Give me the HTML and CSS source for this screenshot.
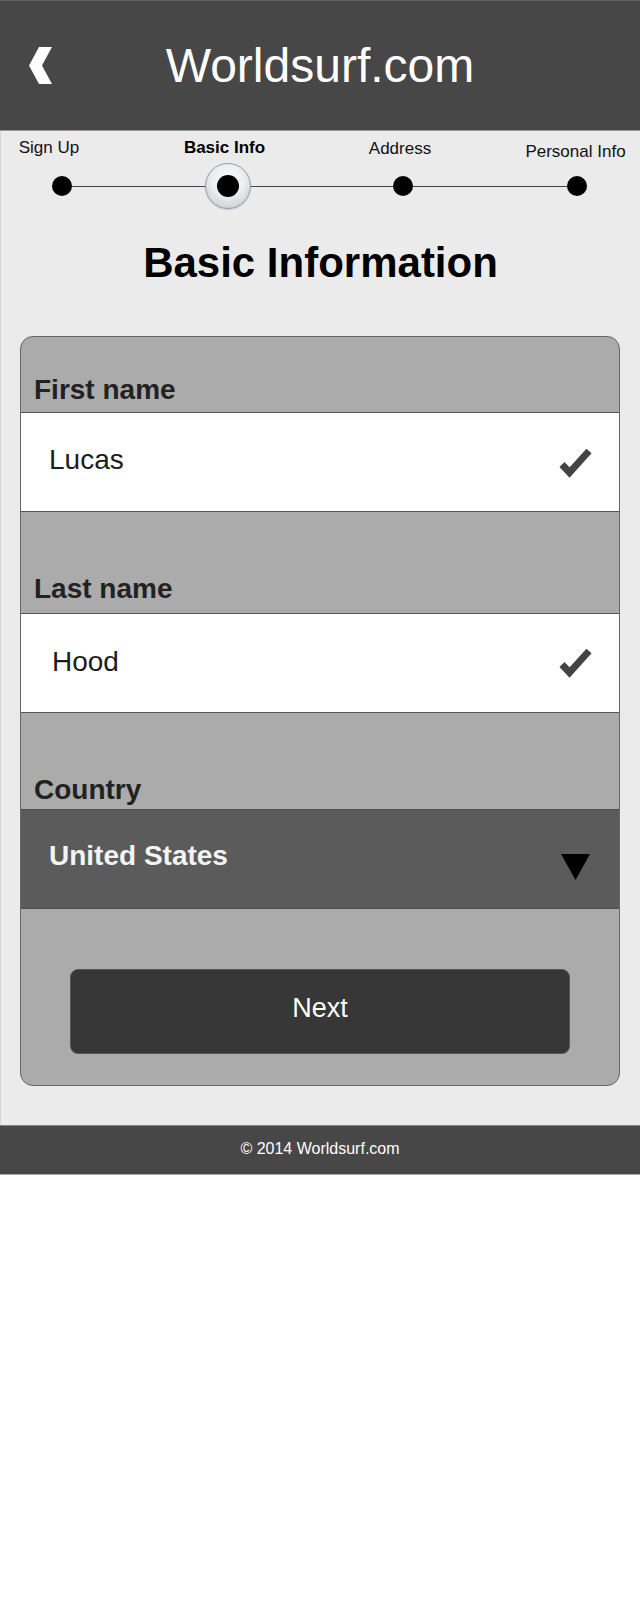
FILE: index.html
```html
<!DOCTYPE html>
<html lang="en">
<head>
<meta charset="utf-8">
<title>Worldsurf.com - Basic Information</title>
<link rel="stylesheet" href="styles.css">
</head>
<body>
<div class="page">
  <header class="header">
    <div class="back">
      <svg class="back-icon" viewBox="0 0 23 37" width="23" height="37" aria-hidden="true">
        <path d="M10 0 H23 L13 18.5 L23 37 H10 L0 18.5 Z" fill="#fff"/>
      </svg>
    </div>
    <h1 class="title">Worldsurf.com</h1>
    <div></div>
  </header>

  <main class="content">
    <div class="steps">
      <div class="steps-line"></div>
      <div class="step step--1">
        <div class="step-label step-label--left">Sign Up</div>
        <div class="step-dot-wrap"><span class="dot"></span></div>
      </div>
      <div class="step step--2">
        <div class="step-label step-label--active">Basic Info</div>
        <div class="step-dot-wrap"><span class="ring"><span class="dot dot--inner"></span></span></div>
      </div>
      <div class="step step--3">
        <div class="step-label step-label--mid">Address</div>
        <div class="step-dot-wrap"><span class="dot"></span></div>
      </div>
      <div class="step step--4">
        <div class="step-label step-label--low">Personal Info</div>
        <div class="step-dot-wrap"><span class="dot"></span></div>
      </div>
    </div>

    <h2 class="heading">Basic Information</h2>

    <div class="card-wrap">
      <form class="card">
        <div class="field-label field-label--first">First name</div>
        <div class="input-row">
          <span class="input-value">Lucas</span>
          <svg class="check" viewBox="0 0 33 30" width="33" height="30" aria-hidden="true">
            <polyline points="3,16.5 10.5,24.5 30,3" fill="none" stroke="#444" stroke-width="7" stroke-linejoin="miter"/>
          </svg>
        </div>

        <div class="field-label">Last name</div>
        <div class="input-row input-row--indent">
          <span class="input-value">Hood</span>
          <svg class="check" viewBox="0 0 33 30" width="33" height="30" aria-hidden="true">
            <polyline points="3,16.5 10.5,24.5 30,3" fill="none" stroke="#444" stroke-width="7" stroke-linejoin="miter"/>
          </svg>
        </div>

        <div class="field-label field-label--tight">Country</div>
        <div class="select-row">
          <span class="select-value">United States</span>
          <svg class="caret" viewBox="0 0 29 26" width="29" height="26" aria-hidden="true">
            <polygon points="0,0 29,0 14.5,26" fill="#000"/>
          </svg>
        </div>

        <div class="button-wrap">
          <button type="button" class="next-btn">Next</button>
        </div>
      </form>
    </div>
  </main>

  <footer class="footer">© 2014 Worldsurf.com</footer>
</div>
</body>
</html>
```

FILE: styles.css
```css
body {
  margin: 0;
  background: #fff;
  font-family: "Liberation Sans", Arial, sans-serif;
}

.page {
  width: 640px;
}

/* Header */
.header {
  box-sizing: border-box;
  height: 131px;
  background: #474747;
  border-top: 1px solid #5e5e5e;
  border-bottom: 1px solid #9a9a9a;
  display: grid;
  grid-template-columns: 1fr auto 1fr;
  align-items: center;
}

.back {
  display: flex;
  padding-left: 29px;
}

.title {
  margin: 0;
  font-size: 48px;
  line-height: 56px;
  font-weight: normal;
  color: #fff;
}

/* Content */
.content {
  display: block;
  background: #ebebeb;
  border-left: 1px solid #d6d6d6;
}

.steps {
  position: relative;
  display: flex;
  padding: 7px 0 0 1px;
}

.steps-line {
  position: absolute;
  left: 61px;
  top: 55px;
  width: 515px;
  height: 1px;
  background: #444;
}

.step {
  width: 120px;
  display: flex;
  flex-direction: column;
  align-items: center;
}

.step--2 { margin-left: 46px; }
.step--3 { margin-left: 55px; }
.step--4 { margin-left: 54px; }

.step-label {
  font-size: 17px;
  line-height: 20px;
  color: #111;
  white-space: nowrap;
  margin-bottom: 4px;
}

.step-label--active {
  font-weight: bold;
  color: #000;
  margin-right: 7px;
}

.step-label--left {
  margin-right: 26px;
}

.step-label--mid {
  margin-top: 1px;
  margin-bottom: 3px;
  margin-right: 6px;
}

.step-label--low {
  margin-top: 4px;
  margin-bottom: 0;
  margin-right: 3px;
}

.step-dot-wrap {
  height: 48px;
  display: flex;
  align-items: center;
  justify-content: center;
}

.dot {
  position: relative;
  z-index: 1;
  display: block;
  width: 20px;
  height: 20px;
  border-radius: 50%;
  background: #000;
}

.ring {
  position: relative;
  z-index: 1;
  box-sizing: border-box;
  width: 46px;
  height: 46px;
  border-radius: 50%;
  border: 1px solid #8e9ea6;
  background: radial-gradient(circle at 50% 38%, #ffffff 0%, #eceeef 45%, #cdd2d4 80%, #b7bdc0 100%);
  box-shadow: 0 1px 1px rgba(0, 0, 0, 0.15);
  display: flex;
  align-items: center;
  justify-content: center;
}

.dot--inner {
  width: 22px;
  height: 22px;
}

.heading {
  margin: 29px 0 49px;
  text-align: center;
  font-size: 42px;
  line-height: 48px;
  font-weight: bold;
  color: #000;
}

/* Card */
.card-wrap {
  padding: 0 20px 39px 19px;
}

.card {
  display: block;
  margin: 0;
  border: 1px solid #666;
  border-radius: 13px;
  background: #ababab;
  overflow: hidden;
}

.field-label {
  padding: 61px 13px 8px;
  font-size: 28px;
  line-height: 32px;
  font-weight: bold;
  color: #222;
}

.field-label--first {
  padding-top: 37px;
  padding-bottom: 6px;
}

.field-label--tight {
  padding-bottom: 3px;
}

.input-row {
  box-sizing: border-box;
  height: 100px;
  background: #fff;
  border-top: 1px solid #555;
  border-bottom: 1px solid #555;
  display: flex;
  justify-content: space-between;
  align-items: flex-start;
  padding: 31px 27px 0 28px;
}

.input-row--indent {
  padding-top: 32px;
  padding-left: 31px;
}

.input-value {
  font-size: 28px;
  line-height: 32px;
  color: #1c1c1c;
}

.check {
  display: block;
  margin-top: 4px;
}

.input-row--indent .check {
  margin-top: 2px;
}

.select-row {
  box-sizing: border-box;
  height: 100px;
  background: #5b5b5b;
  border-top: 1px solid #4e4e4e;
  border-bottom: 1px solid #4e4e4e;
  display: flex;
  justify-content: space-between;
  align-items: flex-start;
  padding: 30px 29px 0 28px;
}

.select-value {
  font-size: 28px;
  line-height: 32px;
  font-weight: bold;
  color: #f4f4f4;
}

.caret {
  display: block;
  margin-top: 14px;
}

.button-wrap {
  display: flex;
  justify-content: center;
  padding: 60px 0 31px;
}

.next-btn {
  box-sizing: border-box;
  width: 500px;
  height: 85px;
  margin: 0;
  border: 1px solid #555;
  border-radius: 8px;
  background: #373737;
  color: #fff;
  font-family: "Liberation Sans", Arial, sans-serif;
  font-size: 27px;
  line-height: 32px;
  display: flex;
  align-items: flex-start;
  justify-content: center;
  padding: 22px 0 0;
}

/* Footer */
.footer {
  background: #474747;
  border-top: 1px solid #858585;
  border-bottom: 1px solid #a8a8a8;
  padding: 13px 0 15px;
  text-align: center;
  color: #fff;
  font-size: 16px;
  line-height: 20px;
}
```
